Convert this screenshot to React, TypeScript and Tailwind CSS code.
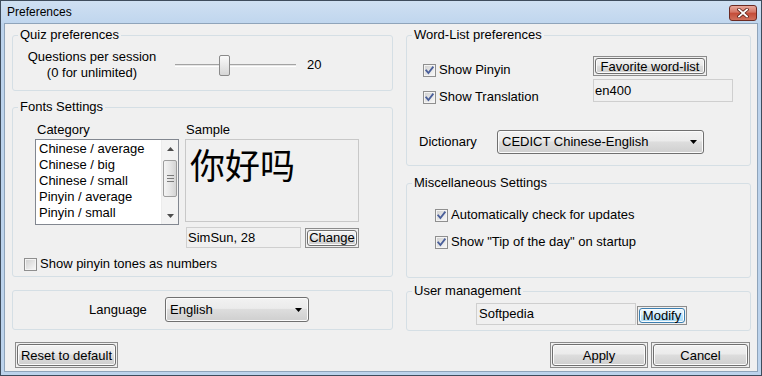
import React from "react";

function Group({ label, className, children }: { label?: string; className?: string; children?: React.ReactNode }) {
  return (
    <div className={`relative rounded-[3px] border border-[#d5dfe5] ${className ?? ""}`}>
      {label ? (
        <span className="absolute -top-[9px] left-[5px] bg-[#f0f0f0] px-[2px] leading-[16px] whitespace-nowrap">{label}</span>
      ) : null}
      {children}
    </div>
  );
}

function Btn({ children, className, blue }: { children: React.ReactNode; className?: string; blue?: boolean }) {
  return (
    <div className={`border border-[#8c8c8c] p-[1px] ${className ?? ""}`}>
      <div
        className={
          blue
            ? "flex h-full w-full items-center justify-center rounded-[3px] border border-[#3c7fb1] bg-[linear-gradient(#eaf6fd,#d9f0fc_45%,#bee6fd_50%,#a7d9f5)] shadow-[inset_0_0_0_1px_#fcfcfc] leading-none"
            : "flex h-full w-full items-center justify-center rounded-[3px] border border-[#707070] bg-[linear-gradient(#f2f2f2,#ebebeb_45%,#dddddd_50%,#cfcfcf)] shadow-[inset_0_0_0_1px_#fbfbfb] leading-none"
        }
      >
        {children}
      </div>
    </div>
  );
}

function Check({ checked }: { checked: boolean }) {
  return (
    <svg width="13" height="13" viewBox="0 0 13 13" className="shrink-0">
      <defs>
        <linearGradient id="cbg" x1="0" y1="0" x2="1" y2="1">
          <stop offset="0" stopColor="#d2d2d2" />
          <stop offset="1" stopColor="#f6f6f6" />
        </linearGradient>
      </defs>
      <rect x="0.5" y="0.5" width="12" height="12" fill="#f4f4f4" stroke="#8f8f8f" />
      <rect x="2" y="2" width="9" height="9" fill="url(#cbg)" />
      {checked && (
        <path d="M3.2 6.4 L5.4 9 L9.8 3.3" fill="none" stroke="#4a5f9a" strokeWidth="1.8" strokeLinecap="square" />
      )}
    </svg>
  );
}

function CheckRow({ checked, label, className }: { checked: boolean; label: string; className?: string }) {
  return (
    <div className={`flex items-center gap-[3px] leading-[16px] ${className ?? ""}`}>
      <Check checked={checked} />
      <span className="whitespace-nowrap">{label}</span>
    </div>
  );
}

function Combo({ value, className }: { value: string; className?: string }) {
  return (
    <div
      className={`flex items-center justify-between rounded-[3px] border border-[#707070] bg-[linear-gradient(#f2f2f2,#ebebeb_45%,#dddddd_50%,#cfcfcf)] shadow-[inset_0_0_0_1px_#fbfbfb] pl-[4px] pr-[6px] ${className ?? ""}`}
    >
      <span className="leading-[16px] whitespace-nowrap">{value}</span>
      <svg width="7" height="4" viewBox="0 0 7 4">
        <polygon points="0,0 7,0 3.5,4" fill="#000" />
      </svg>
    </div>
  );
}

function Field({ value, className }: { value: string; className?: string }) {
  return (
    <div className={`flex items-center border border-[#cfcfcf] bg-[#f0f0f0] pl-[1px] ${className ?? ""}`}>
      <span className="leading-[16px] whitespace-nowrap">{value}</span>
    </div>
  );
}

function Scrollbar() {
  return (
    <div className="flex h-full w-[17px] flex-col border-l border-[#ececec] bg-[#f3f3f3]">
      <div className="flex h-[17px] items-center justify-center">
        <svg width="7" height="4" viewBox="0 0 7 4">
          <polygon points="0,4 7,4 3.5,0" fill="#4d4d4d" />
        </svg>
      </div>
      <div className="flex-1">
        <div className="mx-[1px] mt-[3px] flex h-[37px] flex-col items-center justify-center gap-[2px] rounded-[2px] border border-[#9d9d9d] bg-[linear-gradient(to_right,#f4f4f4,#e6e6e6_50%,#d4d4d4)]">
          <div className="h-[1px] w-[7px] bg-[#7a7a7a]" />
          <div className="h-[1px] w-[7px] bg-[#7a7a7a]" />
          <div className="h-[1px] w-[7px] bg-[#7a7a7a]" />
        </div>
      </div>
      <div className="flex h-[17px] items-center justify-center">
        <svg width="7" height="4" viewBox="0 0 7 4">
          <polygon points="0,0 7,0 3.5,4" fill="#4d4d4d" />
        </svg>
      </div>
    </div>
  );
}

export default function App() {
  const items = ["Chinese / average", "Chinese / big", "Chinese / small", "Pinyin / average", "Pinyin / small"];
  return (
    <div className="flex h-[376px] w-[762px] flex-col overflow-hidden border border-[#3e4c5c] bg-[#bcd3ec] font-['Liberation_Sans',Arial,sans-serif] text-[13px] text-black">
      {/* Title bar */}
      <div className="flex h-[22px] items-center justify-between bg-[linear-gradient(#cfe0f2,#c0d6ee)] pl-[6px] pr-[4px]">
        <span className="text-[12px] leading-none text-black">Preferences</span>
        <div className="mt-[1px] flex h-[16px] w-[28px] items-center justify-center rounded-[3px] border border-[#6b2a22] bg-[linear-gradient(#e9a99c,#d47464_45%,#c44b37_50%,#d0705c)]">
          <svg width="12" height="10" viewBox="0 0 12 10">
            <path d="M2 1.5 L10 8.5 M10 1.5 L2 8.5" stroke="#5a2018" strokeWidth="3.4" strokeLinecap="square" />
            <path d="M2 1.5 L10 8.5 M10 1.5 L2 8.5" stroke="#ffffff" strokeWidth="1.8" strokeLinecap="square" />
          </svg>
        </div>
      </div>

      {/* Body */}
      <div className="mx-[3px] mb-[3px] flex flex-1 flex-col border border-[#8fa4ba] bg-[#f0f0f0] pl-[7px] pr-[6px] pt-[11px]">
        <div className="flex gap-[13px]">
          {/* Left column */}
          <div className="flex w-[381px] flex-col">
            <Group label="Quiz preferences" className="h-[56px] pl-[9px] pt-[13px]">
              <div className="flex items-center">
                <div className="w-[140px] text-center leading-[16px]">
                  <div>Questions per session</div>
                  <div>(0 for unlimited)</div>
                </div>
                <div className="relative ml-[13px] h-[21px] w-[121px]">
                  <div className="absolute left-0 right-0 top-[9px] h-[3px] border-t border-b border-t-[#a3a3a3] border-b-[#ffffff] bg-[#e6e6e6]" />
                  <div className="absolute left-[44px] top-0 h-[21px] w-[11px] rounded-[2px] border border-[#8a8a8a] bg-[linear-gradient(#fafafa,#ececec_40%,#d6d6d6)]" />
                </div>
                <span className="ml-[11px] leading-[16px]">20</span>
              </div>
            </Group>

            <Group label="Fonts Settings" className="mt-[16px] h-[170px] pl-[11px] pt-[14px]">
              <div className="flex pl-[11px]">
                <div className="flex flex-col">
                  <div className="pl-[2px] leading-[16px]">Category</div>
                  <div className="mt-[1px] flex h-[86px] w-[144px] border border-[#828790] bg-white">
                    <div className="flex-1 pl-[3px] pt-[1px]">
                      {items.map((i) => (
                        <div key={i} className="h-[16px] whitespace-nowrap leading-[16px]">
                          {i}
                        </div>
                      ))}
                    </div>
                    <Scrollbar />
                  </div>
                </div>
                <div className="ml-[6px] flex flex-col">
                  <div className="pl-[1px] leading-[16px]">Sample</div>
                  <div className="mt-[1px] h-[83px] w-[174px] border border-[#c8c8c8] bg-[#f0f0f0] pl-[4px]">
                    <div className="font-['Noto_Sans_CJK_SC',sans-serif] text-[35px] leading-[48px]">你好吗</div>
                  </div>
                  <div className="mt-[5px] flex items-center gap-[4px] pl-[1px]">
                    <Field value="SimSun, 28" className="h-[21px] w-[115px]" />
                    <Btn className="h-[20px] w-[54px]">Change</Btn>
                  </div>
                </div>
              </div>
              <CheckRow checked={false} label="Show pinyin tones as numbers" className="mt-[8px]" />
            </Group>

            <Group className="mt-[13px] h-[40px] pt-[6px]">
              <div className="flex items-center pl-[76px]">
                <span className="w-[76px] leading-[16px]">Language</span>
                <Combo value="English" className="h-[25px] w-[144px]" />
              </div>
            </Group>
          </div>

          {/* Right column */}
          <div className="flex w-[345px] flex-col">
            <Group label="Word-List preferences" className="h-[131px] pl-[16px] pt-[20px]">
              <div className="flex">
                <div className="flex w-[170px] flex-col pt-[6px]">
                  <CheckRow checked label="Show Pinyin" />
                  <CheckRow checked label="Show Translation" className="mt-[11px]" />
                </div>
                <div className="flex flex-col gap-[3px]">
                  <Btn className="h-[20px] w-[114px]">Favorite word-list</Btn>
                  <Field value="en400" className="h-[23px] w-[140px]" />
                </div>
              </div>
              <div className="-ml-[4px] mt-[25px] flex items-center">
                <span className="w-[78px] leading-[16px]">Dictionary</span>
                <Combo value="CEDICT Chinese-English" className="h-[24px] w-[207px]" />
              </div>
            </Group>

            <Group label="Miscellaneous Settings" className="mt-[17px] h-[95px] pl-[28px] pt-[23px]">
              <CheckRow checked label="Automatically check for updates" />
              <CheckRow checked label={'Show "Tip of the day" on startup'} className="mt-[11px]" />
            </Group>

            <Group label="User management" className="mt-[13px] h-[40px] pl-[69px] pt-[11px]">
              <div className="flex items-end gap-[1px]">
                <Field value="Softpedia" className="h-[22px] w-[160px] pl-[2px]" />
                <Btn blue className="h-[19px] w-[50px]">Modify</Btn>
              </div>
            </Group>
          </div>
        </div>

        {/* Bottom buttons */}
        <div className="mt-[11px] flex items-center justify-between pl-[3px] pr-[1px]">
          <Btn className="h-[26px] w-[103px]">Reset to default</Btn>
          <div className="flex gap-[3px]">
            <Btn className="h-[26px] w-[98px]">Apply</Btn>
            <Btn className="h-[26px] w-[99px]">Cancel</Btn>
          </div>
        </div>
      </div>
    </div>
  );
}
